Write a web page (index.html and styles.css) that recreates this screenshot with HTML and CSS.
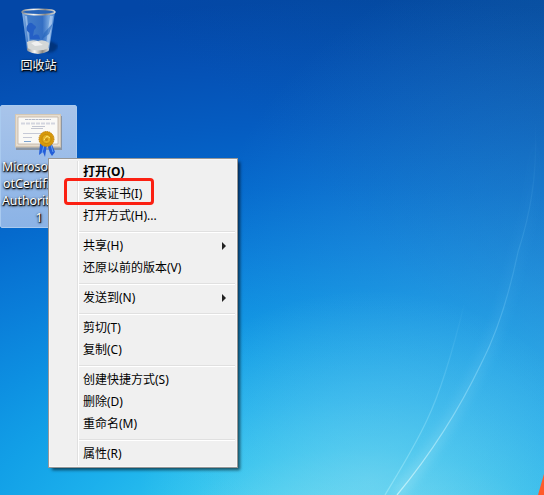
FILE: index.html
```html
<!DOCTYPE html>
<html lang="zh-CN">
<head>
<meta charset="utf-8">
<title>桌面</title>
<link rel="stylesheet" href="styles.css">
</head>
<body>
<main class="desktop">
  <svg class="wallpaper" viewBox="0 0 544 495" aria-hidden="true">
    <defs>
      <linearGradient id="ray" x1="0" y1="120" x2="0" y2="495" gradientUnits="userSpaceOnUse">
        <stop offset="0" stop-color="#8fdcff" stop-opacity="0"/>
        <stop offset=".45" stop-color="#8fdcff" stop-opacity=".2"/>
        <stop offset=".75" stop-color="#a8e6fa" stop-opacity=".5"/>
        <stop offset="1" stop-color="#c8f4fa" stop-opacity=".9"/>
      </linearGradient>
      <linearGradient id="ray2" x1="0" y1="300" x2="0" y2="495" gradientUnits="userSpaceOnUse">
        <stop offset="0" stop-color="#8fdcff" stop-opacity="0"/>
        <stop offset="1" stop-color="#a5ecf8" stop-opacity=".6"/>
      </linearGradient>
      <filter id="soft" x="-20%" y="-20%" width="140%" height="140%"><feGaussianBlur stdDeviation="5"/></filter>
    </defs>
    <path d="M535 120C536 170 530 220 518 252C508 300 496 335 481 364C458 412 430 455 397 495" fill="none" stroke="url(#ray)" stroke-width="12" opacity=".28" filter="url(#soft)"/>
    <path d="M535 120C538 175 530 215 518 252C508 300 496 335 481 364C458 412 430 455 397 495" fill="none" stroke="url(#ray)" stroke-width="1.2"/>
    <path d="M464 305C453 350 439 395 427 420C415 446 400 470 385 495" fill="none" stroke="url(#ray2)" stroke-width="1.2"/>
    <path d="M544 474L538 495H544Z" fill="#ff5b2b"/>
  </svg>

  <div class="shortcuts">
    <div class="shortcut bin">
      <svg class="bin-icon" viewBox="0 0 38 50" aria-hidden="true">
        <defs>
          <linearGradient id="glass"><stop stop-color="#a4c7ef"/><stop offset=".18" stop-color="#4d86cf"/><stop offset=".62" stop-color="#3c75c8"/><stop offset=".82" stop-color="#8db9ea"/><stop offset="1" stop-color="#5f97dd"/></linearGradient>
          <linearGradient id="metal"><stop stop-color="#8b8f94"/><stop offset=".35" stop-color="#f8f8f5"/><stop offset=".7" stop-color="#8a8985"/><stop offset="1" stop-color="#d8d9d8"/></linearGradient>
          <filter id="shade"><feGaussianBlur stdDeviation="1.3"/></filter>
        </defs>
        <path d="M27 32L38 38Q38 45 27 46Z" fill="#03265f" opacity=".6" filter="url(#shade)"/>
        <path d="M2 5L7 43Q18 49 29 43L35 5Z" fill="url(#glass)" opacity=".85"/>
        <path d="M5 9L8.500 37L10 38L7 9ZM30 9L26 38L29 38L33 9Z" fill="#dceaff" opacity=".45"/>
        <path d="M7 19Q10 13 14 18Q18 20 14 23L13 29Q19 25 20 32H10L10 26Q5 24 7 19Z" fill="#245fc5"/>
        <path d="M33 16L24 26L22 32L29 27Z" fill="#2163bb" opacity=".6"/>
        <path d="M7 35Q12 32 18 34Q24 32 29 36L28 44H8Z" fill="#d4d7d7"/>
        <path d="M11 36L17 34L23 38L15 39Z" fill="#f0f0f0"/>
        <path d="M7 41Q18 46 29 41L28.500 44Q18 50 7.500 44Z" fill="url(#metal)"/>
        <ellipse cx="18.500" cy="5" rx="16.500" ry="2.700" fill="#2663b8" stroke="url(#metal)" stroke-width="1.500"/>
      </svg>
      <span class="caption">回收站</span>
    </div>
    <div class="shortcut cert">
      <svg class="cert-icon" viewBox="0 0 50 44" aria-hidden="true">
        <path d="M2 3H48V37H2Z" fill="#746b62" opacity=".5"/>
        <path d="M1 1H47V34.500H1Z" fill="#d3c7b5"/>
        <path d="M2 2H46V33H2Z" fill="#e7ddcf"/>
        <path d="M4 4H44V31H4Z" fill="#faf9f6" stroke="#bfb3a5" stroke-width=".8"/>
        <g fill="none" stroke="#b4b8c6">
          <path d="M11 6.500H37" stroke-dasharray="3 .5"/>
          <path d="M7 10.500H41" stroke="#d3d6df" stroke-width="2" stroke-dasharray="4 1"/>
          <path d="M18 13.500H31M17 15.500H29" stroke="#c3c6d2"/>
          <path d="M9 20.500H27M9 24.500H18" stroke="#c6c9d6"/>
          <path d="M10 28.500H17" stroke="#7da4cf"/>
        </g>
        <path d="M26 31L25 42L29 39L31 44L33 31ZM33 31L36 40L38 43L41 39L37 29Z" fill="#235ed8"/>
        <path d="M30 32L28 40M37 32L39 39" stroke="#63a0f4"/>
        <circle cx="32.500" cy="26" r="7.500" fill="#d6980b" stroke="#c48308" stroke-dasharray="1.500 .7"/>
        <circle cx="32.500" cy="26" r="4.500" fill="#e5b020" stroke="#c48a09"/>
        <path d="M30 27L33 23L36 25" fill="none" stroke="#ffe475"/>
        <circle cx="32.500" cy="26.500" r="1.500" fill="#c98d10"/>
      </svg>
      <div class="caption cert-name"><span>Microso</span><span class="indent">otCertifi</span><span>Authorit</span><span class="last">1</span></div>
    </div>
  </div>

  <nav class="menu">
    <div class="item default">打开(O)</div>
    <div class="item marked">安装证书(I)</div>
    <div class="item">打开方式(H)...</div>
    <div class="separator"></div>
    <div class="item submenu">共享(H)</div>
    <div class="item">还原以前的版本(V)</div>
    <div class="separator"></div>
    <div class="item submenu">发送到(N)</div>
    <div class="separator"></div>
    <div class="item">剪切(T)</div>
    <div class="item">复制(C)</div>
    <div class="separator"></div>
    <div class="item">创建快捷方式(S)</div>
    <div class="item">删除(D)</div>
    <div class="item">重命名(M)</div>
    <div class="separator"></div>
    <div class="item">属性(R)</div>
  </nav>
</main>
</body>
</html>
```
FILE: styles.css
```css
*, *::before, *::after { box-sizing: border-box; }

body {
  margin: 0;
  font-family: "Noto Sans", "Noto Sans CJK SC", sans-serif;
  font-size: 12px;
}

.desktop {
  position: relative;
  width: 544px;
  height: 495px;
  overflow: hidden;
  background:
    radial-gradient(ellipse 230px 190px at 370px 480px, #8edaf270, #8edaf200),
    radial-gradient(ellipse 380px 420px at 560px 370px, #5ab4e460, #5ab4e400),
    linear-gradient(225deg, #0e5f7c30, #0e5f7c00 40%),
    radial-gradient(ellipse 1050px 560px at 360px 560px, #50d6f0 11%, #2bc2ee 20%, #1cb0ec 28.600%, #12a0e7 37.500%, #0d8fe1 46%, #0a7ed9 55%, #056acd 67%, #055cc1 78%, #0551b5 89%, #0347a7 100%);
}

.wallpaper { position: absolute; inset: 0; }

.shortcuts {
  position: relative;
  display: flex;
  flex-direction: column;
  width: 77px;
}

.shortcut { display: flex; flex-direction: column; align-items: center; }

.bin { height: 105px; padding-top: 7px; }
.bin-icon { width: 38px; height: 50px; }
.bin .caption { line-height: 18px; }

.caption {
  color: #fff;
  text-shadow: 1px 1px 1px #000, 0 1px 2px #000, 1px 1px 3px #0009;
}

.cert {
  height: 123px;
  padding-top: 7px;
  border: 1px solid #a9caef;
  border-radius: 2px;
  background: linear-gradient(#a8c4ea, #8bb3e6);
}

.cert-icon { width: 50px; height: 44px; }

.cert-name {
  display: flex;
  flex-direction: column;
  width: 100%;
  padding: 1px 0 0 1px;
  font-size: 12.3px;
  line-height: 17px;
}

.indent { padding-left: 1px; }
.last { text-align: center; }

.menu {
  position: absolute;
  left: 48px;
  top: 158px;
  width: 190px;
  padding: 2px;
  border: 1px solid #979797;
  background:
    linear-gradient(90deg, #e0e0e0 50%, #fff 50%) 28px 2px / 2px calc(100% - 4px) no-repeat,
    #f0f0f0;
  box-shadow: inset 0 0 0 1px #f7f7f7, 3px 3px 3px -1px #0009;
}

.item {
  position: relative;
  height: 22px;
  padding-left: 32px;
  line-height: 22px;
  white-space: nowrap;
  color: #000;
}

.default { font-weight: 700; }

.marked::after {
  content: "";
  position: absolute;
  z-index: 1;
  left: 13px;
  top: -5px;
  width: 90px;
  height: 27px;
  border: 3px solid #fb2012;
  border-radius: 4px;
}

.submenu { display: flex; align-items: center; justify-content: space-between; padding-right: 9px; }

.submenu::after {
  content: "";
  border: 4px solid transparent;
  border-right: 0;
  border-left-color: #222;
}

.separator {
  height: 8px;
  margin-left: 28px;
  background: linear-gradient(#e0e0e0 50%, #fff 50%) 0 4px / 100% 2px no-repeat;
}
```
